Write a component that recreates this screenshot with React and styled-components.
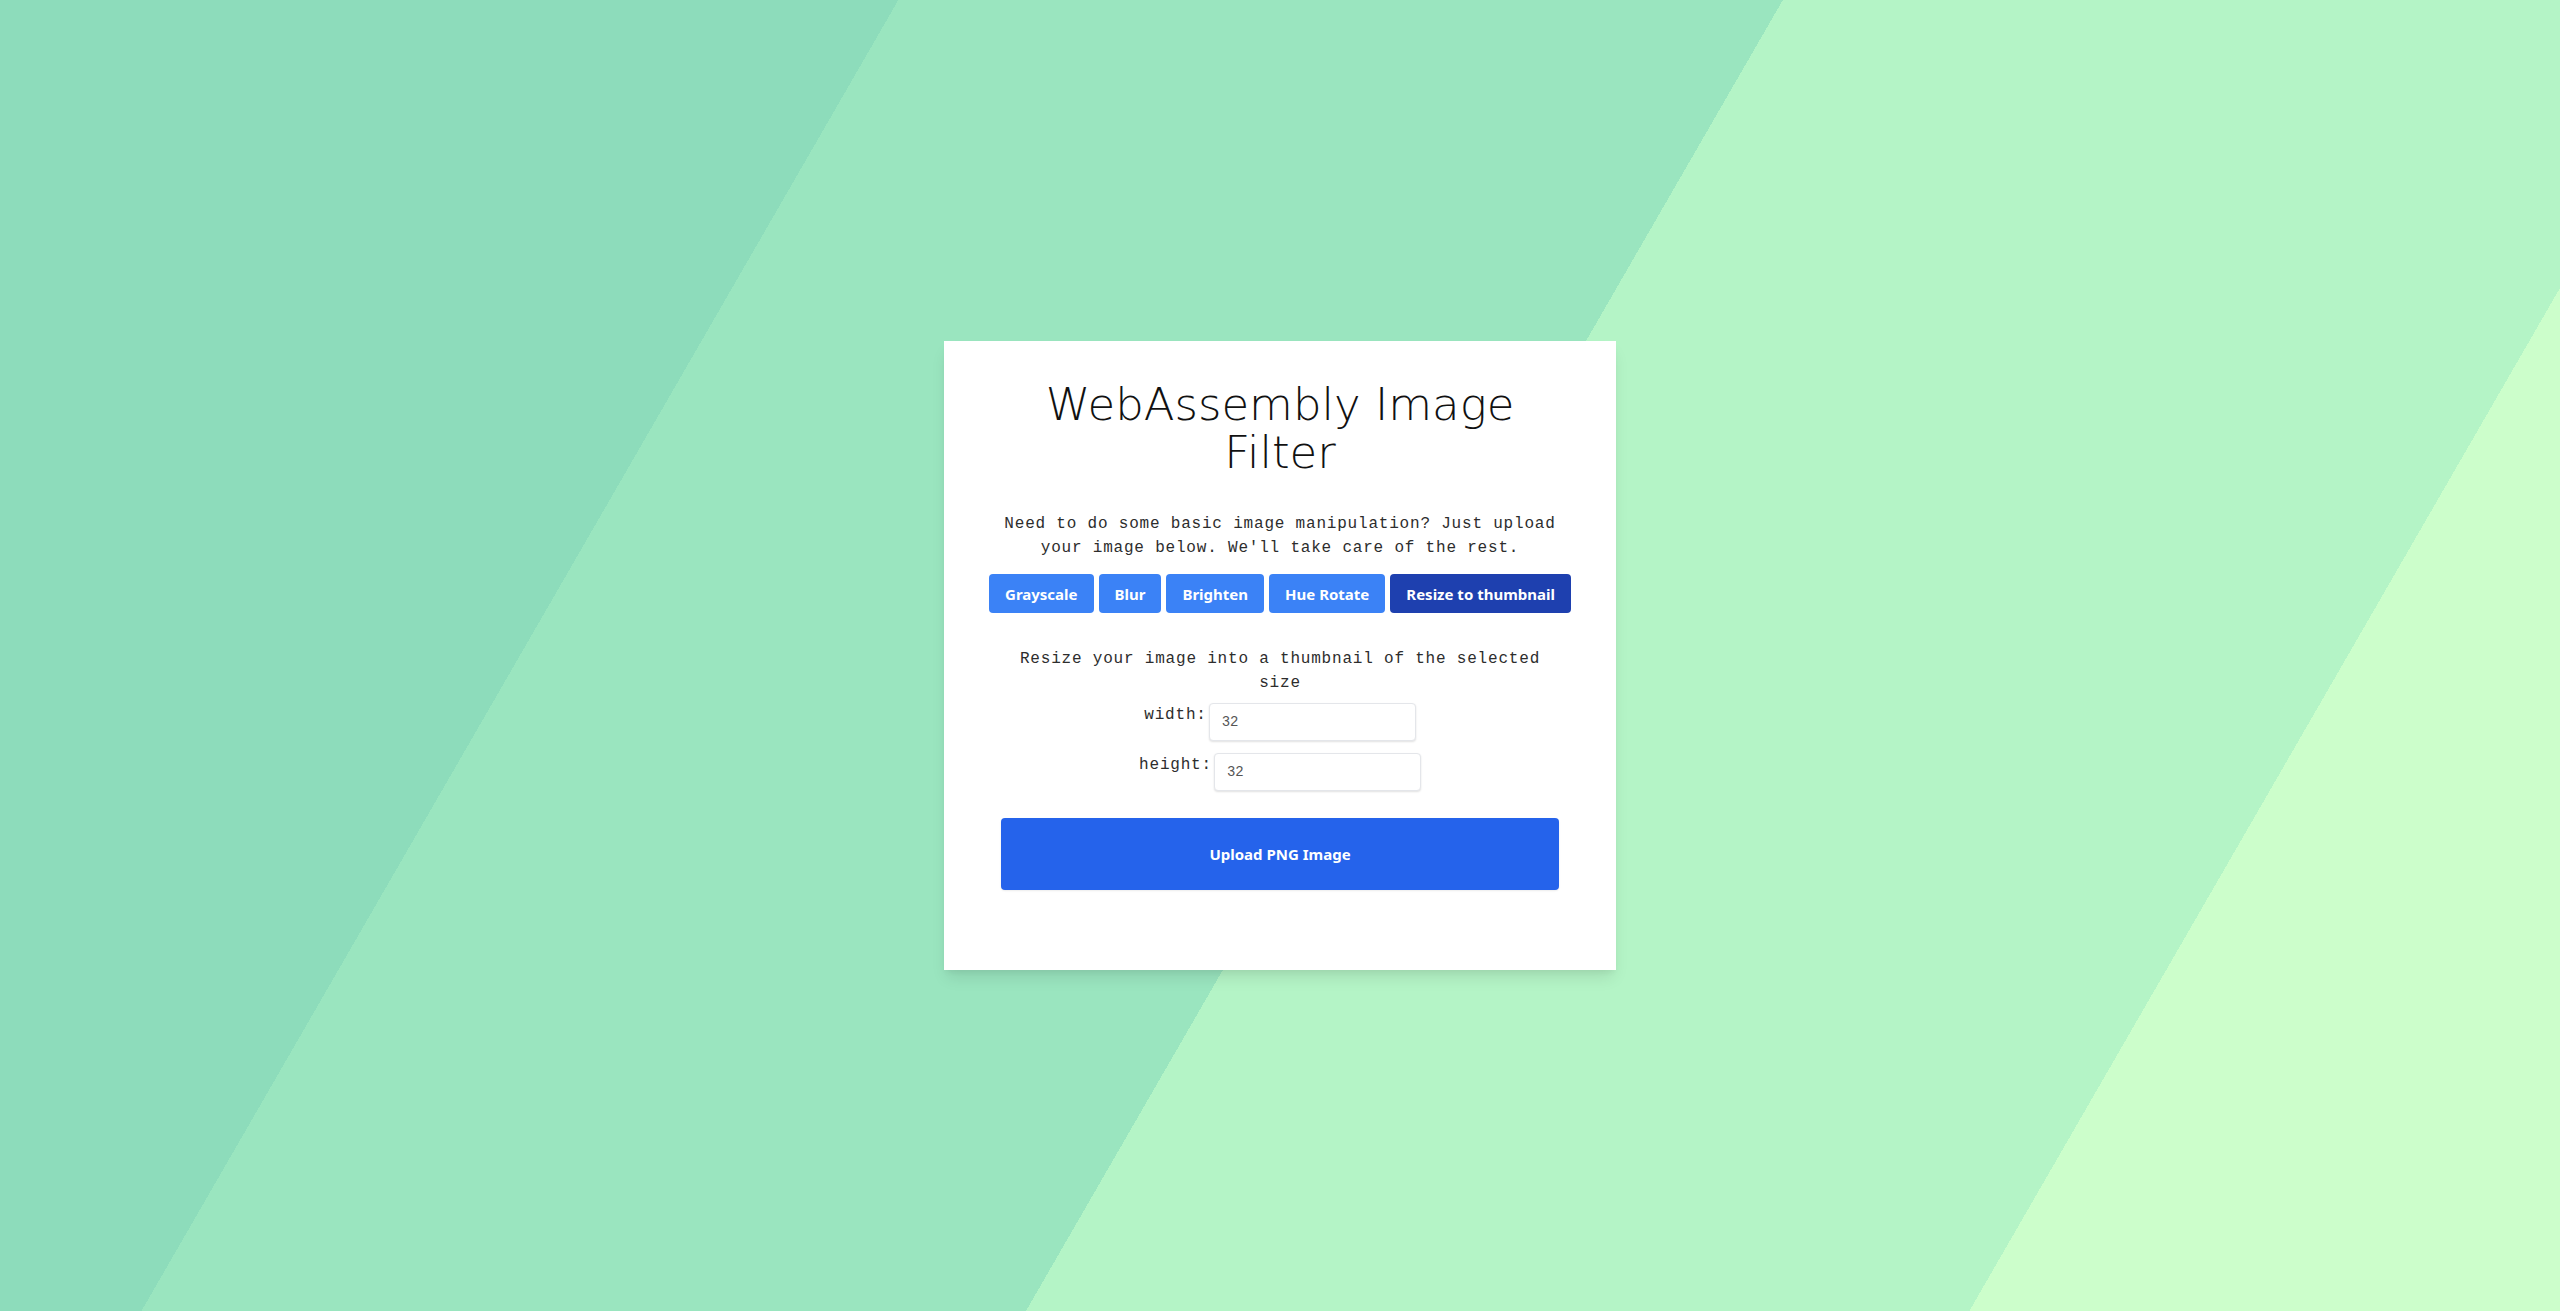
import React from 'react';
import styled, { createGlobalStyle } from 'styled-components';

const GlobalStyle = createGlobalStyle`
    *{
        box-sizing:border-box;
    }
    body{
        margin:0;
        font-family:"Liberation Mono",monospace;
    }
`

const filters = ['Grayscale', 'Blur', 'Brighten', 'Hue Rotate', 'Resize to thumbnail'];

function App() {
    const selected = 'Resize to thumbnail';
    return (
        <Page>
            <GlobalStyle/>
            <Card>
                <Title>WebAssembly Image Filter</Title>
                <Intro>
                    Need to do some basic image manipulation? Just upload your image below. We'll take care of the rest.
                </Intro>
                <FilterBar>
                    {filters.map(f => (
                        <FilterButton key={f} active={f === selected ? 1 : 0}>{f}</FilterButton>
                    ))}
                </FilterBar>
                <Hint>Resize your image into a thumbnail of the selected size</Hint>
                <Field>
                    <label htmlFor="w">width:</label>
                    <SizeInput id="w" type="text" defaultValue="32"/>
                </Field>
                <Field>
                    <label htmlFor="h">height:</label>
                    <SizeInput id="h" type="text" defaultValue="32"/>
                </Field>
                <Upload>Upload PNG Image</Upload>
            </Card>
        </Page>
    )
}

const Page = styled.div`
    width:100%;
    min-height:100vh;
    display:flex;
    align-items:center;
    justify-content:center;
    background:linear-gradient(120deg,
        #8ddcbb 0 778px,
        #9ae5bf 778px 1544px,
        #b4f4c6 1544px 2361px,
        #ccfecb 2361px);
`
const Card = styled.div`
    width:672px;
    background-color:#fff;
    padding:40px 40px 80px;
    display:flex;
    flex-direction:column;
    align-items:center;
    box-shadow:0 10px 15px -3px rgba(0,0,0,.1),0 4px 6px -2px rgba(0,0,0,.05);
`
const Title = styled.h1`
    margin:0 0 35px;
    font-family:"DejaVu Sans","Noto Sans",sans-serif;
    font-weight:300;
    font-size:45px;
    line-height:48px;
    color:#111;
    text-align:center;
`
const Intro = styled.p`
    margin:0 0 14px;
    font-size:16px;
    line-height:24px;
    letter-spacing:.8px;
    color:#2d2d2d;
    text-align:center;
`
const FilterBar = styled.div`
    display:flex;
    gap:5px;
    justify-content:center;
    margin-bottom:34px;
`
const FilterButton = styled.button`
    height:39px;
    padding:0 16px;
    border:none;
    border-radius:4px;
    background-color:${p => p.active ? '#1e40af' : '#3b82f6'};
    color:#fff;
    font-family:"Noto Sans",sans-serif;
    font-weight:700;
    font-size:15px;
    white-space:nowrap;
    cursor:pointer;
`
const Hint = styled.p`
    margin:0 0 8px;
    padding:0 16px;
    font-size:16px;
    line-height:24px;
    letter-spacing:.8px;
    color:#2d2d2d;
    text-align:center;
`
const Field = styled.div`
    display:flex;
    align-items:flex-start;
    justify-content:center;
    margin-bottom:12px;
    label{
        font-size:16px;
        line-height:24px;
        letter-spacing:.8px;
        color:#2d2d2d;
        margin-right:2px;
    }
    &:last-of-type{
        margin-bottom:27px;
    }
`
const SizeInput = styled.input`
    width:207px;
    height:38px;
    padding:0 12px;
    border:1px solid #e4e6ea;
    border-radius:4px;
    box-shadow:0 1px 2px rgba(0,0,0,.12);
    font-family:"Liberation Mono",monospace;
    font-size:14px;
    color:#555;
    outline:none;
`
const Upload = styled.button`
    width:558px;
    height:72px;
    border:none;
    border-radius:4px;
    background-color:#2563eb;
    color:#fff;
    font-family:"Noto Sans",sans-serif;
    font-weight:700;
    font-size:15px;
    box-shadow:0 1px 2px rgba(0,0,0,.08);
    cursor:pointer;
`
export default App;
